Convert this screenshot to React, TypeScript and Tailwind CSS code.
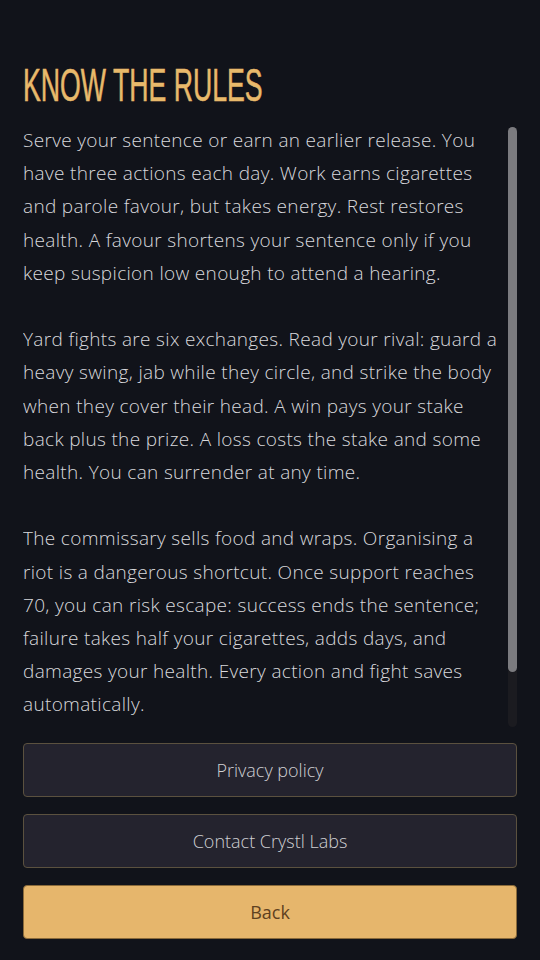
const paragraphs = [
  [
    "Serve your sentence or earn an earlier release. You",
    "have three actions each day. Work earns cigarettes",
    "and parole favour, but takes energy. Rest restores",
    "health. A favour shortens your sentence only if you",
    "keep suspicion low enough to attend a hearing.",
  ],
  [
    "Yard fights are six exchanges. Read your rival: guard a",
    "heavy swing, jab while they circle, and strike the body",
    "when they cover their head. A win pays your stake",
    "back plus the prize. A loss costs the stake and some",
    "health. You can surrender at any time.",
  ],
  [
    "The commissary sells food and wraps. Organising a",
    "riot is a dangerous shortcut. Once support reaches",
    "70, you can risk escape: success ends the sentence;",
    "failure takes half your cigarettes, adds days, and",
    "damages your health. Every action and fight saves",
    "automatically.",
  ],
];

const buttonBase =
  "h-[54px] rounded-[4px] border text-[18px] font-['Open_Sans',sans-serif]";

export default function App() {
  return (
    <div className="flex h-screen flex-col bg-[#11131a] px-[23px] font-['Open_Sans','Lato',sans-serif] font-light text-[#d8d8dc]">
      <h1 className="mt-[55px] h-[60px] overflow-visible whitespace-nowrap">
        <span className="inline-block origin-left scale-x-[0.58] font-['Liberation_Sans',sans-serif] text-[46px] leading-[60px] font-normal text-[#e8b96b] [-webkit-text-stroke:0.6px_#e8b96b]">
          KNOW THE RULES
        </span>
      </h1>

      {/* rules text with its scrollbar */}
      <div className="mt-[9px] flex min-h-0 flex-1 gap-[3px]">
        <div className="min-w-0 flex-1 overflow-hidden">
          <div className="flex flex-col gap-[33.2px]">
            {paragraphs.map((lines, i) => (
              <p key={i} className="text-[19px] leading-[33.2px] tracking-[0.33px] whitespace-nowrap">
                {lines.map((line, j) => (
                  <span key={j}>
                    {line}
                    {j < lines.length - 1 && <br />}
                  </span>
                ))}
              </p>
            ))}
          </div>
        </div>
        <div className="flex w-[9px] flex-col pt-[3px]">
          <div className="flex flex-1 flex-col rounded-full bg-[#1b1b20]">
            <div className="h-[545px] rounded-full bg-[#7b7b7f]" />
          </div>
        </div>
      </div>

      <div className="mt-[16px] mb-[21px] flex flex-col gap-[17px]">
        <button className={`${buttonBase} border-[#5b513f] bg-[#24232e] font-light text-[#cfcfd3]`}>
          Privacy policy
        </button>
        <button className={`${buttonBase} border-[#5b513f] bg-[#24232e] font-light text-[#cfcfd3]`}>
          Contact Crystl Labs
        </button>
        <button className={`${buttonBase} border-[#8a6a3a] bg-[#e6b66c] font-normal text-[#5e4120]`}>
          Back
        </button>
      </div>
    </div>
  );
}
